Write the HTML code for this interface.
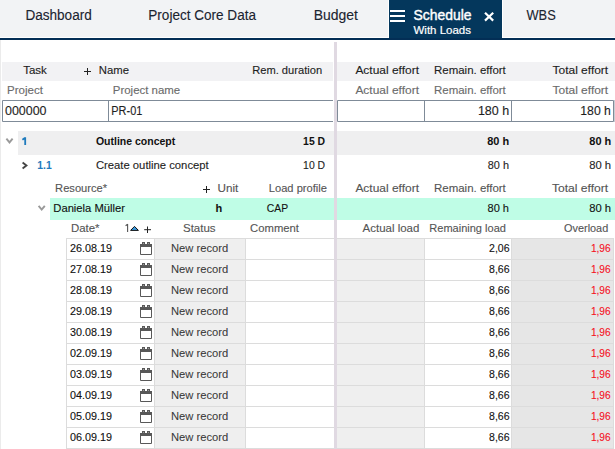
<!DOCTYPE html>
<html><head><meta charset="utf-8"><style>
html,body{margin:0;padding:0;background:#fff;width:615px;height:449px;overflow:hidden;font-family:"Liberation Sans",sans-serif;}
svg{display:block}
text{font-family:"Liberation Sans",sans-serif;}
</style></head><body>
<svg width="615" height="449" viewBox="0 0 615 449" font-family="Liberation Sans, sans-serif"><rect x="0" y="0" width="615" height="37" fill="#f2f3f5"/>
<rect x="0" y="37" width="615" height="1" fill="#ffffff"/>
<rect x="388" y="0" width="1" height="37" fill="#ffffff"/>
<rect x="502" y="0" width="1" height="37" fill="#ffffff"/>
<rect x="389" y="0" width="113" height="38" fill="#04375c"/>
<rect x="0" y="38" width="615" height="2" fill="#032e55"/>
<text x="25.4" y="20" font-size="14" fill="#1b2430" stroke="#1b2430" stroke-width="0.12" text-anchor="start" textLength="66.4" lengthAdjust="spacingAndGlyphs">Dashboard</text>
<text x="148.3" y="20" font-size="14" fill="#1b2430" stroke="#1b2430" stroke-width="0.12" text-anchor="start" textLength="107.7" lengthAdjust="spacingAndGlyphs">Project Core Data</text>
<text x="313.8" y="20" font-size="14" fill="#1b2430" stroke="#1b2430" stroke-width="0.12" text-anchor="start" textLength="44.2" lengthAdjust="spacingAndGlyphs">Budget</text>
<text x="526.5" y="20" font-size="14" fill="#1b2430" stroke="#1b2430" stroke-width="0.12" text-anchor="start" textLength="29.2" lengthAdjust="spacingAndGlyphs">WBS</text>
<text x="413.5" y="20" font-size="14" fill="#ffffff" stroke="#ffffff" stroke-width="0.4" text-anchor="start" textLength="58.0" lengthAdjust="spacingAndGlyphs">Schedule</text>
<text x="413.5" y="34" font-size="11.2" fill="#ffffff" stroke="#ffffff" stroke-width="0.2" text-anchor="start" textLength="57.5" lengthAdjust="spacingAndGlyphs">With Loads</text>
<rect x="390" y="10" width="15" height="2" fill="#ffffff"/>
<rect x="390" y="15" width="15" height="2" fill="#ffffff"/>
<rect x="390" y="20" width="15" height="2" fill="#ffffff"/>
<path d="M485 12.8 L493.2 20.6 M493.2 12.8 L485 20.6" stroke="#ffffff" stroke-width="2.2" fill="none"/>
<rect x="0" y="40" width="1" height="409" fill="#ebebeb"/>
<rect x="334" y="42" width="3" height="407" fill="#e0d9e2"/>
<rect x="2" y="62" width="331" height="19" fill="#f2f2f4"/>
<rect x="337" y="62" width="278" height="19" fill="#f2f2f4"/>
<text x="23.2" y="74" font-size="11" fill="#1e1e1e" stroke="#1e1e1e" stroke-width="0.12" text-anchor="start" textLength="23.7" lengthAdjust="spacingAndGlyphs">Task</text>
<path d="M87.5 68 V75 M84 71.5 H91" stroke="#222" stroke-width="1" fill="none"/>
<text x="98.8" y="74" font-size="11" fill="#1e1e1e" stroke="#1e1e1e" stroke-width="0.12" text-anchor="start" textLength="30.2" lengthAdjust="spacingAndGlyphs">Name</text>
<text x="322.1" y="74" font-size="11" fill="#1e1e1e" stroke="#1e1e1e" stroke-width="0.12" text-anchor="end" textLength="69.9" lengthAdjust="spacingAndGlyphs">Rem. duration</text>
<text x="419.0" y="74" font-size="11" fill="#1e1e1e" stroke="#1e1e1e" stroke-width="0.12" text-anchor="end" textLength="63.6" lengthAdjust="spacingAndGlyphs">Actual effort</text>
<text x="505.8" y="74" font-size="11" fill="#1e1e1e" stroke="#1e1e1e" stroke-width="0.12" text-anchor="end" textLength="71.8" lengthAdjust="spacingAndGlyphs">Remain. effort</text>
<text x="608.2" y="74" font-size="11" fill="#1e1e1e" stroke="#1e1e1e" stroke-width="0.12" text-anchor="end" textLength="55.7" lengthAdjust="spacingAndGlyphs">Total effort</text>
<text x="7.0" y="94" font-size="11" fill="#6b6b6b" stroke="#6b6b6b" stroke-width="0.12" text-anchor="start" textLength="35.9" lengthAdjust="spacingAndGlyphs">Project</text>
<text x="112.8" y="94" font-size="11" fill="#6b6b6b" stroke="#6b6b6b" stroke-width="0.12" text-anchor="start" textLength="67.4" lengthAdjust="spacingAndGlyphs">Project name</text>
<text x="419.0" y="94" font-size="11" fill="#6b6b6b" stroke="#6b6b6b" stroke-width="0.12" text-anchor="end" textLength="63.6" lengthAdjust="spacingAndGlyphs">Actual effort</text>
<text x="505.8" y="94" font-size="11" fill="#6b6b6b" stroke="#6b6b6b" stroke-width="0.12" text-anchor="end" textLength="71.8" lengthAdjust="spacingAndGlyphs">Remain. effort</text>
<text x="608.2" y="94" font-size="11" fill="#6b6b6b" stroke="#6b6b6b" stroke-width="0.12" text-anchor="end" textLength="55.7" lengthAdjust="spacingAndGlyphs">Total effort</text>
<path d="M2.5 100.5 H333 M2.5 100.5 V121.5 H333 M108.5 100.5 V121.5" stroke="#7f8b98" stroke-width="1" fill="none"/>
<path d="M337.5 100.5 H613.5 V121.5 H337.5 Z M424.5 100.5 V121.5 M511.5 100.5 V121.5" stroke="#7f8b98" stroke-width="1" fill="none"/>
<rect x="614" y="100" width="1" height="22" fill="#c9ced4"/>
<text x="5.0" y="115" font-size="12" fill="#1e1e1e" stroke="#1e1e1e" stroke-width="0.12" text-anchor="start" textLength="41.5" lengthAdjust="spacingAndGlyphs">000000</text>
<text x="111.3" y="115" font-size="12" fill="#1e1e1e" stroke="#1e1e1e" stroke-width="0.12" text-anchor="start" textLength="31.0" lengthAdjust="spacingAndGlyphs">PR-01</text>
<text x="509.2" y="115" font-size="12" fill="#1e1e1e" stroke="#1e1e1e" stroke-width="0.12" text-anchor="end" textLength="31.3" lengthAdjust="spacingAndGlyphs">180 h</text>
<text x="610.9" y="115" font-size="12" fill="#1e1e1e" stroke="#1e1e1e" stroke-width="0.12" text-anchor="end" textLength="30.6" lengthAdjust="spacingAndGlyphs">180 h</text>
<rect x="18" y="131" width="316" height="24" fill="#efeff0"/>
<rect x="337" y="131" width="278" height="24" fill="#efeff0"/>
<path d="M6.4 138.6 L9.5 142.4 L12.6 138.6" stroke="#9a9a9a" stroke-width="1.9" fill="none"/>
<path d="M25.2 137.3 V145 M25.2 137.8 L22.4 139.8" stroke="#1f7bbd" stroke-width="1.8" fill="none"/>
<text x="95.9" y="145" font-size="11" font-weight="700" fill="#111" text-anchor="start" textLength="79.4" lengthAdjust="spacingAndGlyphs">Outline concept</text>
<text x="325.1" y="145" font-size="11" font-weight="700" fill="#111" text-anchor="end" textLength="22.0" lengthAdjust="spacingAndGlyphs">15 D</text>
<text x="509.1" y="145" font-size="11" font-weight="700" fill="#111" text-anchor="end" textLength="21.9" lengthAdjust="spacingAndGlyphs">80 h</text>
<text x="611.2" y="145" font-size="11" font-weight="700" fill="#111" text-anchor="end" textLength="21.9" lengthAdjust="spacingAndGlyphs">80 h</text>
<path d="M22.6 162.6 L26.4 165.5 L22.6 168.4" stroke="#444" stroke-width="1.9" fill="none"/>
<text x="37.3" y="169" font-size="11" font-weight="700" fill="#1f7bbd" text-anchor="start" textLength="14.4" lengthAdjust="spacingAndGlyphs">1.1</text>
<text x="95.9" y="169" font-size="11" fill="#1e1e1e" stroke="#1e1e1e" stroke-width="0.12" text-anchor="start" textLength="112.8" lengthAdjust="spacingAndGlyphs">Create outline concept</text>
<text x="325.1" y="169" font-size="11" fill="#1e1e1e" stroke="#1e1e1e" stroke-width="0.12" text-anchor="end" textLength="22.0" lengthAdjust="spacingAndGlyphs">10 D</text>
<text x="509.0" y="169" font-size="11" fill="#1e1e1e" stroke="#1e1e1e" stroke-width="0.12" text-anchor="end" textLength="21.2" lengthAdjust="spacingAndGlyphs">80 h</text>
<text x="611.1" y="169" font-size="11" fill="#1e1e1e" stroke="#1e1e1e" stroke-width="0.12" text-anchor="end" textLength="21.9" lengthAdjust="spacingAndGlyphs">80 h</text>
<text x="55.1" y="192" font-size="11" fill="#555555" stroke="#555555" stroke-width="0.12" text-anchor="start" textLength="52.0" lengthAdjust="spacingAndGlyphs">Resource*</text>
<path d="M206.5 186 V193 M203 189.5 H210" stroke="#222" stroke-width="1" fill="none"/>
<text x="217.5" y="192" font-size="11" fill="#555555" stroke="#555555" stroke-width="0.12" text-anchor="start" textLength="20.8" lengthAdjust="spacingAndGlyphs">Unit</text>
<text x="327.0" y="192" font-size="11" fill="#555555" stroke="#555555" stroke-width="0.12" text-anchor="end" textLength="58.2" lengthAdjust="spacingAndGlyphs">Load profile</text>
<text x="419.0" y="192" font-size="11" fill="#555555" stroke="#555555" stroke-width="0.12" text-anchor="end" textLength="63.6" lengthAdjust="spacingAndGlyphs">Actual effort</text>
<text x="505.8" y="192" font-size="11" fill="#555555" stroke="#555555" stroke-width="0.12" text-anchor="end" textLength="71.8" lengthAdjust="spacingAndGlyphs">Remain. effort</text>
<text x="608.2" y="192" font-size="11" fill="#555555" stroke="#555555" stroke-width="0.12" text-anchor="end" textLength="56.3" lengthAdjust="spacingAndGlyphs">Total effort</text>
<rect x="50" y="198" width="284" height="22" fill="#bffde6"/>
<rect x="337" y="198" width="278" height="22" fill="#bffde6"/>
<path d="M38.6 205.8 L41.7 209.6 L44.8 205.8" stroke="#9a9a9a" stroke-width="1.9" fill="none"/>
<text x="53.3" y="212" font-size="11" fill="#111" stroke="#111" stroke-width="0.12" text-anchor="start" textLength="71.7" lengthAdjust="spacingAndGlyphs">Daniela Müller</text>
<text x="215.5" y="212" font-size="11" font-weight="700" fill="#111" text-anchor="start">h</text>
<text x="266.8" y="212" font-size="11" fill="#111" stroke="#111" stroke-width="0.12" text-anchor="start" textLength="21.3" lengthAdjust="spacingAndGlyphs">CAP</text>
<text x="509.0" y="212" font-size="11" fill="#111" stroke="#111" stroke-width="0.12" text-anchor="end" textLength="21.5" lengthAdjust="spacingAndGlyphs">80 h</text>
<text x="611.1" y="212" font-size="11" fill="#111" stroke="#111" stroke-width="0.12" text-anchor="end" textLength="21.9" lengthAdjust="spacingAndGlyphs">80 h</text>
<text x="70.9" y="232" font-size="11" fill="#555555" stroke="#555555" stroke-width="0.12" text-anchor="start" textLength="28.6" lengthAdjust="spacingAndGlyphs">Date*</text>
<path d="M127.6 224 V232 M127.6 224.3 L125.6 225.8" stroke="#555" stroke-width="1.1" fill="none"/>
<path d="M130.6 230.4 L134.5 226.4 L138.4 230.4 Z" fill="#3a9be0" stroke="#111" stroke-width="1" stroke-linejoin="miter"/>
<path d="M147.5 226.5 V233 M144.2 229.7 H151" stroke="#222" stroke-width="1" fill="none"/>
<text x="183.0" y="232" font-size="11" fill="#555555" stroke="#555555" stroke-width="0.12" text-anchor="start" textLength="32.6" lengthAdjust="spacingAndGlyphs">Status</text>
<text x="250.1" y="232" font-size="11" fill="#555555" stroke="#555555" stroke-width="0.12" text-anchor="start" textLength="48.9" lengthAdjust="spacingAndGlyphs">Comment</text>
<text x="419.4" y="232" font-size="11" fill="#555555" stroke="#555555" stroke-width="0.12" text-anchor="end" textLength="56.8" lengthAdjust="spacingAndGlyphs">Actual load</text>
<text x="505.9" y="232" font-size="11" fill="#555555" stroke="#555555" stroke-width="0.12" text-anchor="end" textLength="76.6" lengthAdjust="spacingAndGlyphs">Remaining load</text>
<text x="608.2" y="232" font-size="11" fill="#555555" stroke="#555555" stroke-width="0.12" text-anchor="end" textLength="44.1" lengthAdjust="spacingAndGlyphs">Overload</text>
<rect x="155" y="238" width="90" height="210" fill="#efefef"/>
<rect x="337" y="238" width="88" height="210" fill="#efefef"/>
<rect x="512" y="238" width="101" height="210" fill="#e6e6e6"/>
<rect x="66" y="238" width="268" height="1" fill="#dcdcdc"/>
<rect x="337" y="238" width="277" height="1" fill="#dcdcdc"/>
<rect x="66" y="259" width="268" height="1" fill="#dcdcdc"/>
<rect x="337" y="259" width="277" height="1" fill="#dcdcdc"/>
<rect x="66" y="280" width="268" height="1" fill="#dcdcdc"/>
<rect x="337" y="280" width="277" height="1" fill="#dcdcdc"/>
<rect x="66" y="301" width="268" height="1" fill="#dcdcdc"/>
<rect x="337" y="301" width="277" height="1" fill="#dcdcdc"/>
<rect x="66" y="322" width="268" height="1" fill="#dcdcdc"/>
<rect x="337" y="322" width="277" height="1" fill="#dcdcdc"/>
<rect x="66" y="343" width="268" height="1" fill="#dcdcdc"/>
<rect x="337" y="343" width="277" height="1" fill="#dcdcdc"/>
<rect x="66" y="364" width="268" height="1" fill="#dcdcdc"/>
<rect x="337" y="364" width="277" height="1" fill="#dcdcdc"/>
<rect x="66" y="385" width="268" height="1" fill="#dcdcdc"/>
<rect x="337" y="385" width="277" height="1" fill="#dcdcdc"/>
<rect x="66" y="406" width="268" height="1" fill="#dcdcdc"/>
<rect x="337" y="406" width="277" height="1" fill="#dcdcdc"/>
<rect x="66" y="427" width="268" height="1" fill="#dcdcdc"/>
<rect x="337" y="427" width="277" height="1" fill="#dcdcdc"/>
<rect x="66" y="448" width="268" height="1" fill="#dcdcdc"/>
<rect x="337" y="448" width="277" height="1" fill="#dcdcdc"/>
<rect x="66" y="238" width="1" height="211" fill="#dcdcdc"/>
<rect x="154" y="238" width="1" height="211" fill="#dcdcdc"/>
<rect x="245" y="238" width="1" height="211" fill="#dcdcdc"/>
<rect x="424" y="238" width="1" height="211" fill="#dcdcdc"/>
<rect x="511" y="238" width="1" height="211" fill="#dcdcdc"/>
<rect x="613" y="238" width="1" height="211" fill="#dcdcdc"/>
<text x="69.9" y="252" font-size="11" fill="#111" stroke="#111" stroke-width="0.12" text-anchor="start" textLength="42.0" lengthAdjust="spacingAndGlyphs">26.08.19</text>
<path d="M140.5 244.5 V254.5 H151.5 V244.5" stroke="#585858" stroke-width="1" fill="none"/>
<rect x="140" y="244" width="12" height="3" fill="#585858"/>
<rect x="142" y="242" width="3" height="2" fill="#585858"/>
<rect x="147" y="242" width="3" height="2" fill="#585858"/>
<rect x="143" y="243" width="1" height="1" fill="#9a9a9a"/>
<rect x="148" y="243" width="1" height="1" fill="#9a9a9a"/>
<text x="171.0" y="252" font-size="11" fill="#3a3a3a" stroke="#3a3a3a" stroke-width="0.05" text-anchor="start" textLength="57.3" lengthAdjust="spacingAndGlyphs">New record</text>
<text x="509.6" y="252" font-size="11" fill="#111" stroke="#111" stroke-width="0.12" text-anchor="end" textLength="20.5" lengthAdjust="spacingAndGlyphs">2,06</text>
<text x="610.6" y="252" font-size="11" fill="#f5101e" stroke="#f5101e" stroke-width="0.12" text-anchor="end" textLength="19.7" lengthAdjust="spacingAndGlyphs">1,96</text>
<text x="69.9" y="273" font-size="11" fill="#111" stroke="#111" stroke-width="0.12" text-anchor="start" textLength="42.0" lengthAdjust="spacingAndGlyphs">27.08.19</text>
<path d="M140.5 265.5 V275.5 H151.5 V265.5" stroke="#585858" stroke-width="1" fill="none"/>
<rect x="140" y="265" width="12" height="3" fill="#585858"/>
<rect x="142" y="263" width="3" height="2" fill="#585858"/>
<rect x="147" y="263" width="3" height="2" fill="#585858"/>
<rect x="143" y="264" width="1" height="1" fill="#9a9a9a"/>
<rect x="148" y="264" width="1" height="1" fill="#9a9a9a"/>
<text x="171.0" y="273" font-size="11" fill="#3a3a3a" stroke="#3a3a3a" stroke-width="0.05" text-anchor="start" textLength="57.3" lengthAdjust="spacingAndGlyphs">New record</text>
<text x="509.6" y="273" font-size="11" fill="#111" stroke="#111" stroke-width="0.12" text-anchor="end" textLength="20.5" lengthAdjust="spacingAndGlyphs">8,66</text>
<text x="610.6" y="273" font-size="11" fill="#f5101e" stroke="#f5101e" stroke-width="0.12" text-anchor="end" textLength="19.7" lengthAdjust="spacingAndGlyphs">1,96</text>
<text x="69.9" y="294" font-size="11" fill="#111" stroke="#111" stroke-width="0.12" text-anchor="start" textLength="42.0" lengthAdjust="spacingAndGlyphs">28.08.19</text>
<path d="M140.5 286.5 V296.5 H151.5 V286.5" stroke="#585858" stroke-width="1" fill="none"/>
<rect x="140" y="286" width="12" height="3" fill="#585858"/>
<rect x="142" y="284" width="3" height="2" fill="#585858"/>
<rect x="147" y="284" width="3" height="2" fill="#585858"/>
<rect x="143" y="285" width="1" height="1" fill="#9a9a9a"/>
<rect x="148" y="285" width="1" height="1" fill="#9a9a9a"/>
<text x="171.0" y="294" font-size="11" fill="#3a3a3a" stroke="#3a3a3a" stroke-width="0.05" text-anchor="start" textLength="57.3" lengthAdjust="spacingAndGlyphs">New record</text>
<text x="509.6" y="294" font-size="11" fill="#111" stroke="#111" stroke-width="0.12" text-anchor="end" textLength="20.5" lengthAdjust="spacingAndGlyphs">8,66</text>
<text x="610.6" y="294" font-size="11" fill="#f5101e" stroke="#f5101e" stroke-width="0.12" text-anchor="end" textLength="19.7" lengthAdjust="spacingAndGlyphs">1,96</text>
<text x="69.9" y="315" font-size="11" fill="#111" stroke="#111" stroke-width="0.12" text-anchor="start" textLength="42.0" lengthAdjust="spacingAndGlyphs">29.08.19</text>
<path d="M140.5 307.5 V317.5 H151.5 V307.5" stroke="#585858" stroke-width="1" fill="none"/>
<rect x="140" y="307" width="12" height="3" fill="#585858"/>
<rect x="142" y="305" width="3" height="2" fill="#585858"/>
<rect x="147" y="305" width="3" height="2" fill="#585858"/>
<rect x="143" y="306" width="1" height="1" fill="#9a9a9a"/>
<rect x="148" y="306" width="1" height="1" fill="#9a9a9a"/>
<text x="171.0" y="315" font-size="11" fill="#3a3a3a" stroke="#3a3a3a" stroke-width="0.05" text-anchor="start" textLength="57.3" lengthAdjust="spacingAndGlyphs">New record</text>
<text x="509.6" y="315" font-size="11" fill="#111" stroke="#111" stroke-width="0.12" text-anchor="end" textLength="20.5" lengthAdjust="spacingAndGlyphs">8,66</text>
<text x="610.6" y="315" font-size="11" fill="#f5101e" stroke="#f5101e" stroke-width="0.12" text-anchor="end" textLength="19.7" lengthAdjust="spacingAndGlyphs">1,96</text>
<text x="69.9" y="336" font-size="11" fill="#111" stroke="#111" stroke-width="0.12" text-anchor="start" textLength="42.0" lengthAdjust="spacingAndGlyphs">30.08.19</text>
<path d="M140.5 328.5 V338.5 H151.5 V328.5" stroke="#585858" stroke-width="1" fill="none"/>
<rect x="140" y="328" width="12" height="3" fill="#585858"/>
<rect x="142" y="326" width="3" height="2" fill="#585858"/>
<rect x="147" y="326" width="3" height="2" fill="#585858"/>
<rect x="143" y="327" width="1" height="1" fill="#9a9a9a"/>
<rect x="148" y="327" width="1" height="1" fill="#9a9a9a"/>
<text x="171.0" y="336" font-size="11" fill="#3a3a3a" stroke="#3a3a3a" stroke-width="0.05" text-anchor="start" textLength="57.3" lengthAdjust="spacingAndGlyphs">New record</text>
<text x="509.6" y="336" font-size="11" fill="#111" stroke="#111" stroke-width="0.12" text-anchor="end" textLength="20.5" lengthAdjust="spacingAndGlyphs">8,66</text>
<text x="610.6" y="336" font-size="11" fill="#f5101e" stroke="#f5101e" stroke-width="0.12" text-anchor="end" textLength="19.7" lengthAdjust="spacingAndGlyphs">1,96</text>
<text x="69.9" y="357" font-size="11" fill="#111" stroke="#111" stroke-width="0.12" text-anchor="start" textLength="42.0" lengthAdjust="spacingAndGlyphs">02.09.19</text>
<path d="M140.5 349.5 V359.5 H151.5 V349.5" stroke="#585858" stroke-width="1" fill="none"/>
<rect x="140" y="349" width="12" height="3" fill="#585858"/>
<rect x="142" y="347" width="3" height="2" fill="#585858"/>
<rect x="147" y="347" width="3" height="2" fill="#585858"/>
<rect x="143" y="348" width="1" height="1" fill="#9a9a9a"/>
<rect x="148" y="348" width="1" height="1" fill="#9a9a9a"/>
<text x="171.0" y="357" font-size="11" fill="#3a3a3a" stroke="#3a3a3a" stroke-width="0.05" text-anchor="start" textLength="57.3" lengthAdjust="spacingAndGlyphs">New record</text>
<text x="509.6" y="357" font-size="11" fill="#111" stroke="#111" stroke-width="0.12" text-anchor="end" textLength="20.5" lengthAdjust="spacingAndGlyphs">8,66</text>
<text x="610.6" y="357" font-size="11" fill="#f5101e" stroke="#f5101e" stroke-width="0.12" text-anchor="end" textLength="19.7" lengthAdjust="spacingAndGlyphs">1,96</text>
<text x="69.9" y="378" font-size="11" fill="#111" stroke="#111" stroke-width="0.12" text-anchor="start" textLength="42.0" lengthAdjust="spacingAndGlyphs">03.09.19</text>
<path d="M140.5 370.5 V380.5 H151.5 V370.5" stroke="#585858" stroke-width="1" fill="none"/>
<rect x="140" y="370" width="12" height="3" fill="#585858"/>
<rect x="142" y="368" width="3" height="2" fill="#585858"/>
<rect x="147" y="368" width="3" height="2" fill="#585858"/>
<rect x="143" y="369" width="1" height="1" fill="#9a9a9a"/>
<rect x="148" y="369" width="1" height="1" fill="#9a9a9a"/>
<text x="171.0" y="378" font-size="11" fill="#3a3a3a" stroke="#3a3a3a" stroke-width="0.05" text-anchor="start" textLength="57.3" lengthAdjust="spacingAndGlyphs">New record</text>
<text x="509.6" y="378" font-size="11" fill="#111" stroke="#111" stroke-width="0.12" text-anchor="end" textLength="20.5" lengthAdjust="spacingAndGlyphs">8,66</text>
<text x="610.6" y="378" font-size="11" fill="#f5101e" stroke="#f5101e" stroke-width="0.12" text-anchor="end" textLength="19.7" lengthAdjust="spacingAndGlyphs">1,96</text>
<text x="69.9" y="399" font-size="11" fill="#111" stroke="#111" stroke-width="0.12" text-anchor="start" textLength="42.0" lengthAdjust="spacingAndGlyphs">04.09.19</text>
<path d="M140.5 391.5 V401.5 H151.5 V391.5" stroke="#585858" stroke-width="1" fill="none"/>
<rect x="140" y="391" width="12" height="3" fill="#585858"/>
<rect x="142" y="389" width="3" height="2" fill="#585858"/>
<rect x="147" y="389" width="3" height="2" fill="#585858"/>
<rect x="143" y="390" width="1" height="1" fill="#9a9a9a"/>
<rect x="148" y="390" width="1" height="1" fill="#9a9a9a"/>
<text x="171.0" y="399" font-size="11" fill="#3a3a3a" stroke="#3a3a3a" stroke-width="0.05" text-anchor="start" textLength="57.3" lengthAdjust="spacingAndGlyphs">New record</text>
<text x="509.6" y="399" font-size="11" fill="#111" stroke="#111" stroke-width="0.12" text-anchor="end" textLength="20.5" lengthAdjust="spacingAndGlyphs">8,66</text>
<text x="610.6" y="399" font-size="11" fill="#f5101e" stroke="#f5101e" stroke-width="0.12" text-anchor="end" textLength="19.7" lengthAdjust="spacingAndGlyphs">1,96</text>
<text x="69.9" y="420" font-size="11" fill="#111" stroke="#111" stroke-width="0.12" text-anchor="start" textLength="42.0" lengthAdjust="spacingAndGlyphs">05.09.19</text>
<path d="M140.5 412.5 V422.5 H151.5 V412.5" stroke="#585858" stroke-width="1" fill="none"/>
<rect x="140" y="412" width="12" height="3" fill="#585858"/>
<rect x="142" y="410" width="3" height="2" fill="#585858"/>
<rect x="147" y="410" width="3" height="2" fill="#585858"/>
<rect x="143" y="411" width="1" height="1" fill="#9a9a9a"/>
<rect x="148" y="411" width="1" height="1" fill="#9a9a9a"/>
<text x="171.0" y="420" font-size="11" fill="#3a3a3a" stroke="#3a3a3a" stroke-width="0.05" text-anchor="start" textLength="57.3" lengthAdjust="spacingAndGlyphs">New record</text>
<text x="509.6" y="420" font-size="11" fill="#111" stroke="#111" stroke-width="0.12" text-anchor="end" textLength="20.5" lengthAdjust="spacingAndGlyphs">8,66</text>
<text x="610.6" y="420" font-size="11" fill="#f5101e" stroke="#f5101e" stroke-width="0.12" text-anchor="end" textLength="19.7" lengthAdjust="spacingAndGlyphs">1,96</text>
<text x="69.9" y="441" font-size="11" fill="#111" stroke="#111" stroke-width="0.12" text-anchor="start" textLength="42.0" lengthAdjust="spacingAndGlyphs">06.09.19</text>
<path d="M140.5 433.5 V443.5 H151.5 V433.5" stroke="#585858" stroke-width="1" fill="none"/>
<rect x="140" y="433" width="12" height="3" fill="#585858"/>
<rect x="142" y="431" width="3" height="2" fill="#585858"/>
<rect x="147" y="431" width="3" height="2" fill="#585858"/>
<rect x="143" y="432" width="1" height="1" fill="#9a9a9a"/>
<rect x="148" y="432" width="1" height="1" fill="#9a9a9a"/>
<text x="171.0" y="441" font-size="11" fill="#3a3a3a" stroke="#3a3a3a" stroke-width="0.05" text-anchor="start" textLength="57.3" lengthAdjust="spacingAndGlyphs">New record</text>
<text x="509.6" y="441" font-size="11" fill="#111" stroke="#111" stroke-width="0.12" text-anchor="end" textLength="20.5" lengthAdjust="spacingAndGlyphs">8,66</text>
<text x="610.6" y="441" font-size="11" fill="#f5101e" stroke="#f5101e" stroke-width="0.12" text-anchor="end" textLength="19.7" lengthAdjust="spacingAndGlyphs">1,96</text></svg>
</body></html>
